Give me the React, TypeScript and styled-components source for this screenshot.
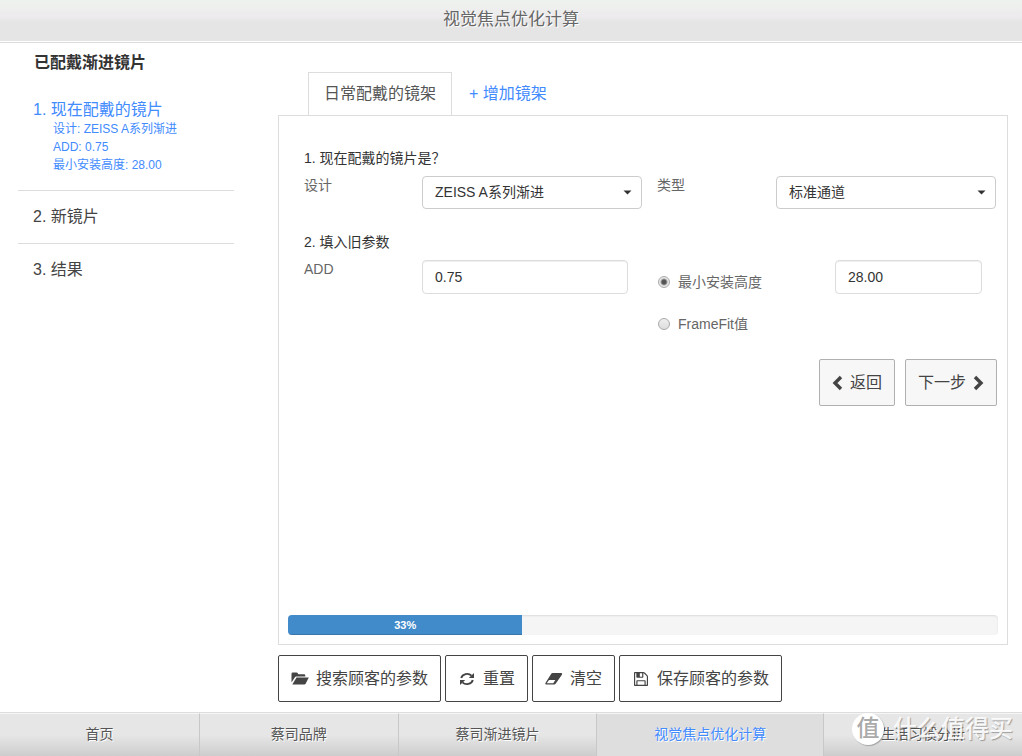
import React from 'react';
import styled, { createGlobalStyle, css } from 'styled-components';

const GlobalStyle = createGlobalStyle`
  *, *::before, *::after { box-sizing: border-box; }
  body {
    margin: 0;
    background: #fff;
    color: #333;
    font: 14px/20px "Liberation Sans", "Noto Sans CJK SC", sans-serif;
  }
  button, input, select { font: inherit; color: inherit; }
`;

const Page = styled.div`
  display: flex;
  flex-direction: column;
  min-height: 100vh;
`;

const Header = styled.header`
  border-bottom: 1px solid #ddd;
  padding-bottom: 1px;
`;

const HeaderTitle = styled.h1`
  margin: 0;
  height: 41px;
  padding-top: 1px;
  background: linear-gradient(#eef2ee, #edebed 40%, #e5e5e5 55%, #e5e5e5);
  color: #666;
  font-size: 17px;
  font-weight: 400;
  line-height: 38px;
  text-align: center;
  text-shadow: 1px 1px 0 #fff;
`;

const Body = styled.div`
  display: flex;
  flex: 1;
  gap: 44px;
  padding: 0 14px 10px 18px;
`;

const Sidebar = styled.aside`
  flex: 0 0 216px;
`;

const SidebarTitle = styled.h2`
  margin: 8px 0 14px;
  padding-left: 16px;
  font-size: 16px;
  line-height: 24px;
`;

const Steps = styled.ol`
  margin: 0;
  padding: 0;
  list-style: none;
`;

const Step = styled.li<{ $active?: boolean }>`
  padding: 16px 15px;
  color: ${(p) => (p.$active ? '#428bff' : '#444')};
  font-size: 16px;
  line-height: 20px;
  ${(p) => p.$active && css`padding-top: 11px;`}
  & + & { border-top: 1px solid #ddd; }
`;

const StepDetails = styled.div`
  padding-left: 20px;
  font-size: 12px;
  line-height: 18px;
`;

const Main = styled.main`
  display: flex;
  flex: 1;
  flex-direction: column;
  min-width: 0;
  padding-top: 29px;
`;

const Tabs = styled.div`
  display: flex;
  gap: 1px;
  margin: 0 0 -1px 30px;
`;

const Tab = styled.button<{ $active?: boolean }>`
  height: 44px;
  padding: 0 15px 2px;
  border: 1px solid transparent;
  border-bottom: 0;
  background: transparent;
  color: #428bff;
  font-size: 16px;
  ${(p) => p.$active && css`
    border-color: #ddd;
    background: #fff;
    color: #555;
  `}
`;

const Panel = styled.section`
  display: flex;
  flex: 1;
  flex-direction: column;
  padding: 32px 9px 9px;
  border: 1px solid #ddd;
`;

const Question = styled.fieldset`
  min-width: 0;
  margin: 0 2px 23px 16px;
  padding: 0;
  border: 0;
`;

const Legend = styled.legend`
  padding: 0 0 8px;
`;

const LensRow = styled.div`
  display: grid;
  grid-template-columns: 118px 1fr 134px 1fr;
`;

const ParameterRow = styled.div`
  display: grid;
  grid-template-columns: 118px 1fr 207px 147px;
  margin-right: 14px;
`;

const Label = styled.label<{ $indent?: boolean }>`
  padding-left: ${(p) => (p.$indent ? 15 : 0)}px;
  color: #666;
  line-height: 18px;
`;

const SelectBox = styled.div`
  display: flex;
  align-items: center;
  position: relative;
  svg { position: absolute; right: 10px; pointer-events: none; }
`;

const Select = styled.select`
  width: 100%;
  height: 33px;
  padding: 0 30px 1px 12px;
  border: 1px solid #ccc;
  border-radius: 4px;
  appearance: none;
  background: #fff;
`;

const TextInput = styled.input`
  width: 100%;
  height: 34px;
  padding: 0 12px;
  border: 1px solid #ddd;
  border-radius: 4px;
  background: #fff;
  box-shadow: inset 0 1px 1px rgba(0, 0, 0, 0.07);
`;

const Radios = styled.div`
  display: flex;
  flex-direction: column;
  gap: 22px;
  padding: 12px 0 0 30px;
`;

const RadioLabel = styled.label`
  display: flex;
  align-items: center;
  gap: 8px;
  color: #666;
`;

const Radio = styled.input`
  width: 12px;
  height: 12px;
  margin: 0;
  border: 1px solid #aaa;
  border-radius: 50%;
  appearance: none;
  background: linear-gradient(#eee, #ddd);
  &:checked { background: radial-gradient(circle, #555 0 2px, #e8e8e8 4px); }
`;

const PagerRow = styled.div`
  display: flex;
  justify-content: flex-end;
  gap: 10px;
  margin: 2px 1px 0 0;
`;

const Button = styled.button<{ $light?: boolean }>`
  display: inline-flex;
  align-items: center;
  gap: 7px;
  height: 47px;
  padding: 0 12px;
  border: 1px solid ${(p) => (p.$light ? '#b0b0b0' : '#444')};
  border-radius: 2px;
  background: ${(p) => (p.$light ? '#f7f7f7' : '#fff')};
  color: #444;
  font-size: 16px;
  white-space: nowrap;
`;

const Progress = styled.div`
  height: 20px;
  margin-top: auto;
  overflow: hidden;
  border-radius: 4px;
  background: #f5f5f5;
  box-shadow: inset 0 1px 2px rgba(0, 0, 0, 0.1);
`;

const ProgressBar = styled.div`
  height: 100%;
  background: #428bca;
  box-shadow: inset 0 -1px 0 rgba(0, 0, 0, 0.15);
  color: #fff;
  font-size: 11px;
  font-weight: 700;
  text-align: center;
`;

const Toolbar = styled.div`
  display: flex;
  gap: 4px;
  margin-top: 10px;
`;

const Footer = styled.footer`
  position: relative;
  border-top: 1px solid #ddd;
`;

const Nav = styled.nav`
  display: grid;
  grid-template-columns: 1fr 1fr 1fr 1.14fr 1fr;
`;

const NavLink = styled.a<{ $active?: boolean }>`
  height: 43px;
  border-top: 1px solid #f5f5f5;
  background: ${(p) => (p.$active ? '#dedede' : 'linear-gradient(#e6e6e6 50%, #cdcdcd)')};
  color: ${(p) => (p.$active ? '#428bff' : '#555')};
  line-height: 40px;
  text-align: center;
  text-decoration: none;
  text-shadow: 1px 1px 0 #fff;
  & + & { border-left: 1px solid #c8c8c8; }
`;

const Watermark = styled.div`
  display: flex;
  align-items: center;
  gap: 9px;
  position: absolute;
  right: 9px;
  bottom: 11px;
  color: rgba(255, 255, 255, 0.9);
  font-size: 24px;
  font-weight: 500;
  line-height: 32px;
  text-shadow: 1px 1px 1px rgba(0, 0, 0, 0.3);
  pointer-events: none;
`;

const WatermarkBadge = styled.span`
  width: 32px;
  height: 32px;
  border-radius: 50%;
  background: #fff;
  box-shadow: 1px 1px 1px rgba(0, 0, 0, 0.25);
  color: #aaa;
  font-size: 23px;
  line-height: 30px;
  text-align: center;
  text-shadow: none;
`;

const Caret = () => (
  <svg width="9" height="5" viewBox="0 0 9 5" aria-hidden="true">
    <path d="M0.5 0.5h8L4.5 4.5z" fill="#333" />
  </svg>
);

const Chevron = ({ right }: { right?: boolean }) => (
  <svg width="11" height="16" viewBox="0 0 11 16" aria-hidden="true">
    <path
      d={right ? 'M2 2l6 6-6 6' : 'M9 2L3 8l6 6'}
      fill="none"
      stroke="#444"
      strokeWidth="3.4"
    />
  </svg>
);

const FolderIcon = () => (
  <svg width="18" height="16" viewBox="0 0 18 16" fill="#444" aria-hidden="true">
    <path d="M0.500 11.500V2.800Q0.500 1.500 1.800 1.500H5.500Q6.500 1.500 6.900 2.400L7.400 3.300H13Q14.300 3.300 14.300 4.600V5.400H5.300Q4.400 5.400 3.900 6.200z" />
    <path d="M5.500 6.500H17.800L14.600 12.700Q14.200 13.400 13.400 13.400H1.300z" />
  </svg>
);

const RefreshIcon = () => (
  <svg width="14" height="14" viewBox="0 0 14 14" aria-hidden="true">
    <path d="M1.200 6A6 5.400 0 0 1 11.500 3.700M12.800 8A6 5.400 0 0 1 2.500 10.300" fill="none" stroke="#444" strokeWidth="1.900" />
    <path d="M14 1v5H8.800zM0 13V8h5.200z" fill="#444" />
  </svg>
);

const EraserIcon = () => (
  <svg width="18" height="14" viewBox="0 0 18 14" aria-hidden="true">
    <path d="M7.500 1h8.700q1.400 0.200 0.700 1.700L10.800 11.600q-0.600 0.900-1.600 0.900H1.200q-1.400-0.300-0.600-1.700L6.100 1.900Q6.700 1 7.500 1z" fill="#444" />
    <path d="M4 7.900h6.300L8.300 11.300H1.700z" fill="#fff" />
  </svg>
);

const SaveIcon = () => (
  <svg width="14" height="14" viewBox="128 128 1536 1536" fill="#444" aria-hidden="true">
    <path d="M512 1536h768v-384h-768v384zm896 0h128v-896q0-14-10-38.500t-20-34.500l-281-281q-10-10-34-20t-39-10v416q0 40-28 68t-68 28h-576q-40 0-68-28t-28-68v-416h-128v1280h128v-416q0-40 28-68t68-28h832q40 0 68 28t28 68v416zm-384-928v-320q0-13-9.500-22.500t-22.500-9.500h-192q-13 0-22.500 9.500t-9.500 22.500v320q0 13 9.500 22.500t22.500 9.500h192q13 0 22.500-9.500t9.500-22.500zm640 32v928q0 40-28 68t-68 28h-1344q-40 0-68-28t-28-68v-1344q0-40 28-68t68-28h928q40 0 88 20t76 48l280 280q28 28 48 76t20 88z" />
  </svg>
);

const IconSlot = styled.span`
  display: inline-flex;
  justify-content: center;
  width: 18px;
`;

const navItems = ['首页', '蔡司品牌', '蔡司渐进镜片', '视觉焦点优化计算', '生活习惯分析'];
const activeNav = '视觉焦点优化计算';

const actions = [
  { label: '搜索顾客的参数', icon: <FolderIcon /> },
  { label: '重置', icon: <RefreshIcon /> },
  { label: '清空', icon: <EraserIcon /> },
  { label: '保存顾客的参数', icon: <SaveIcon /> },
];

export default function App() {
  const progress = 33;
  return (
    <Page>
      <GlobalStyle />
      <Header>
        <HeaderTitle>视觉焦点优化计算</HeaderTitle>
      </Header>
      <Body>
        <Sidebar>
          <SidebarTitle>已配戴渐进镜片</SidebarTitle>
          <Steps>
            <Step $active>
              1. 现在配戴的镜片
              <StepDetails>
                <div>设计: ZEISS A系列渐进</div>
                <div>ADD: 0.75</div>
                <div>最小安装高度: 28.00</div>
              </StepDetails>
            </Step>
            <Step>2. 新镜片</Step>
            <Step>3. 结果</Step>
          </Steps>
        </Sidebar>
        <Main>
          <Tabs>
            <Tab type="button" $active>日常配戴的镜架</Tab>
            <Tab type="button">+ 增加镜架</Tab>
          </Tabs>
          <Panel>
            <Question>
              <Legend>1. 现在配戴的镜片是？</Legend>
              <LensRow>
                <Label htmlFor="design">设计</Label>
                <SelectBox>
                  <Select id="design"><option>ZEISS A系列渐进</option></Select>
                  <Caret />
                </SelectBox>
                <Label htmlFor="type" $indent>类型</Label>
                <SelectBox>
                  <Select id="type"><option>标准通道</option></Select>
                  <Caret />
                </SelectBox>
              </LensRow>
            </Question>
            <Question>
              <Legend>2. 填入旧参数</Legend>
              <ParameterRow>
                <Label htmlFor="add">ADD</Label>
                <TextInput id="add" defaultValue="0.75" />
                <Radios>
                  <RadioLabel>
                    <Radio type="radio" name="measure" defaultChecked />
                    最小安装高度
                  </RadioLabel>
                  <RadioLabel>
                    <Radio type="radio" name="measure" />
                    FrameFit值
                  </RadioLabel>
                </Radios>
                <TextInput aria-label="最小安装高度" defaultValue="28.00" />
              </ParameterRow>
            </Question>
            <PagerRow>
              <Button type="button" $light><Chevron />返回</Button>
              <Button type="button" $light>下一步<Chevron right /></Button>
            </PagerRow>
            <Progress>
              <ProgressBar style={{ width: `${progress}%` }}>{progress}%</ProgressBar>
            </Progress>
          </Panel>
          <Toolbar>
            {actions.map((action) => (
              <Button type="button" key={action.label}>
                <IconSlot>{action.icon}</IconSlot>
                {action.label}
              </Button>
            ))}
          </Toolbar>
        </Main>
      </Body>
      <Footer>
        <Nav>
          {navItems.map((item) => (
            <NavLink href="#" key={item} $active={item === activeNav}>{item}</NavLink>
          ))}
        </Nav>
        <Watermark>
          <WatermarkBadge>值</WatermarkBadge>
          什么值得买
        </Watermark>
      </Footer>
    </Page>
  );
}
